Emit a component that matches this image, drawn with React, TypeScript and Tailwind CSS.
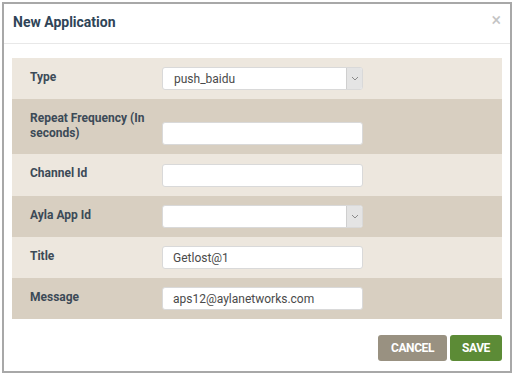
import React from "react";

const font = { fontFamily: "Roboto, 'Liberation Sans', sans-serif" };

function Chevron() {
  return (
    <svg width="8" height="5" viewBox="0 0 8 5" fill="none">
      <path d="M1 1l3 3 3-3" stroke="#8a8a8a" strokeWidth="1" />
    </svg>
  );
}

function TextBox({ value }: { value?: string }) {
  return (
    <div className="w-[201px] h-[23px] bg-white border border-[#d9d9d9] rounded-[3px] pl-[10px] flex items-center text-[12px] text-[#4a4a4a]">
      {value}
    </div>
  );
}

function SelectBox({ value }: { value?: string }) {
  return (
    <div className="w-[201px] h-[23px] bg-white border border-[#d9d9d9] rounded-[3px] flex items-stretch text-[12px] text-[#4a4a4a] overflow-hidden">
      <div className="flex-1 pl-[11px] flex items-center">{value}</div>
      <div className="w-[16px] bg-[#e4e4e4] border-l border-[#cfcfcf] flex items-center justify-center">
        <Chevron />
      </div>
    </div>
  );
}

function Row({
  label,
  dark,
  h,
  children,
}: {
  label: React.ReactNode;
  dark?: boolean;
  h: string;
  children: React.ReactNode;
}) {
  return (
    <div className={`flex ${h} ${dark ? "bg-[#d8cfc1]" : "bg-[#ede7de]"}`}>
      <div className="w-[150px] pl-[18px] pr-[8px] pt-[12px] text-[12px] leading-[15px] font-bold text-[#3c4a57]">
        {label}
      </div>
      <div className="self-end pb-[9px]">{children}</div>
    </div>
  );
}

export default function App() {
  return (
    <div className="w-[515px] h-[375px] bg-white pt-[2px] pl-[2px]" style={font}>
      <div className="w-[510px] h-[371px] border-2 border-[#a8a8a8] bg-white flex flex-col">
        <div className="h-[40px] border-b border-[#e8e8e8] flex items-center justify-between pl-[9px] pr-[9px]">
          <div className="text-[14px] font-bold text-[#2f4457] -mt-[2px]">New Application</div>
          <div className="text-[18px] leading-none text-[#c4c4c4] -mt-[8px]">×</div>
        </div>
        <div className="pt-[14px] px-[8px]">
          <Row label="Type" h="h-[41px]">
            <SelectBox value="push_baidu" />
          </Row>
          <Row label="Repeat Frequency (In seconds)" dark h="h-[55px]">
            <TextBox />
          </Row>
          <Row label="Channel Id" h="h-[42px]">
            <TextBox />
          </Row>
          <Row label="Ayla App Id" dark h="h-[41px]">
            <SelectBox />
          </Row>
          <Row label="Title" h="h-[41px]">
            <TextBox value="Getlost@1" />
          </Row>
          <Row label="Message" dark h="h-[41px]">
            <TextBox value="aps12@aylanetworks.com" />
          </Row>
        </div>
        <div className="flex justify-end gap-[3px] pr-[8px] pt-[16px]">
          <button className="w-[69px] h-[26px] rounded-[3px] bg-[#999181] text-white text-[12px] font-bold tracking-[-0.4px]">
            CANCEL
          </button>
          <button className="w-[52px] h-[26px] rounded-[3px] bg-[#5c8b36] text-white text-[12px] font-bold tracking-[-0.4px]">
            SAVE
          </button>
        </div>
      </div>
    </div>
  );
}
